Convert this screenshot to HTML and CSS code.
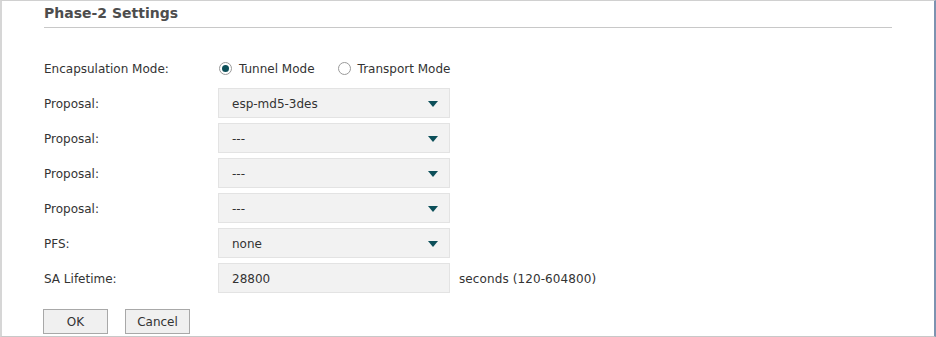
FILE: index.html
```html
<!DOCTYPE html>
<html lang="en">
<head>
    <meta charset="UTF-8" />
    <title>Phase-2 Settings</title>
    <link rel="stylesheet" href="styles.css">
</head>
<body>
    <div class="panel">
        <h2 class="titulo">Phase-2 Settings</h2>

        <div class="form">
            <label class="etiqueta">Encapsulation Mode:</label>
            <div class="control">
                <span class="radio marcado"></span><span class="radio-texto">Tunnel Mode</span>
                <span class="radio"></span><span class="radio-texto">Transport Mode</span>
            </div>

            <label class="etiqueta">Proposal:</label>
            <div class="control">
                <div class="selector"><span>esp-md5-3des</span>
                    <svg width="10" height="6" viewBox="0 0 10 6"><polygon points="0,0 10,0 5,6" /></svg>
                </div>
            </div>

            <label class="etiqueta">Proposal:</label>
            <div class="control">
                <div class="selector"><span>---</span>
                    <svg width="10" height="6" viewBox="0 0 10 6"><polygon points="0,0 10,0 5,6" /></svg>
                </div>
            </div>

            <label class="etiqueta">Proposal:</label>
            <div class="control">
                <div class="selector"><span>---</span>
                    <svg width="10" height="6" viewBox="0 0 10 6"><polygon points="0,0 10,0 5,6" /></svg>
                </div>
            </div>

            <label class="etiqueta">Proposal:</label>
            <div class="control">
                <div class="selector"><span>---</span>
                    <svg width="10" height="6" viewBox="0 0 10 6"><polygon points="0,0 10,0 5,6" /></svg>
                </div>
            </div>

            <label class="etiqueta">PFS:</label>
            <div class="control">
                <div class="selector"><span>none</span>
                    <svg width="10" height="6" viewBox="0 0 10 6"><polygon points="0,0 10,0 5,6" /></svg>
                </div>
            </div>

            <label class="etiqueta">SA Lifetime:</label>
            <div class="control">
                <div class="selector"><span>28800</span></div>
                <span class="ayuda">seconds (120-604800)</span>
            </div>
        </div>

        <div class="botones">
            <button class="boton">OK</button>
            <button class="boton">Cancel</button>
        </div>
    </div>
</body>
</html>
```

FILE: styles.css
```css
body {
    margin: 0;
    font-family: Tahoma, "DejaVu Sans", Verdana, sans-serif;
    font-size: 12px;
    color: #333;
    background-color: white;
}

.panel {
    width: 936px;
    height: 337px;
    box-sizing: border-box;
    border-top: 1px solid #d0d0d0;
    border-left: 2px solid #d6d6d6;
    border-bottom: 1px solid #c8c8c8;
    border-right: 2px solid #7d93b0;
    padding: 0 42px;
}

.titulo {
    margin: 0;
    padding-top: 3px;
    padding-bottom: 4px;
    line-height: 19px;
    font-size: 14px;
    font-weight: bold;
    color: #4d4d4d;
    border-bottom: 1px solid #c8c8c8;
}

.form {
    display: grid;
    grid-template-columns: 174px 1fr;
    row-gap: 5px;
    margin-top: 25px;
}

.etiqueta,
.control {
    display: flex;
    align-items: center;
    height: 30px;
    padding-top: 1px;
    box-sizing: border-box;
}

.radio {
    width: 11px;
    height: 11px;
    border: 1px solid #9a9a9a;
    border-radius: 50%;
    display: flex;
    align-items: center;
    justify-content: center;
    margin-left: 1px;
}

.radio.marcado::after {
    content: "";
    width: 7px;
    height: 7px;
    border-radius: 50%;
    background-color: #0c4f59;
}

.radio-texto {
    margin-left: 7px;
    margin-right: 22px;
}

.selector {
    width: 232px;
    height: 30px;
    margin-top: -1px;
    box-sizing: border-box;
    border: 1px solid #e3e3e3;
    background-color: #f2f2f2;
    display: flex;
    align-items: center;
    justify-content: space-between;
    padding: 1px 11px 0 13px;
}

.selector svg {
    fill: #0c4f59;
}

.ayuda {
    margin-left: 9px;
    letter-spacing: 0.1px;
}

.botones {
    display: flex;
    gap: 17px;
    margin-top: 16px;
    margin-left: -1px;
}

.boton {
    width: 65px;
    height: 25px;
    box-sizing: border-box;
    border: 1px solid #a8a8a8;
    background-color: #f0f0f0;
    font-family: inherit;
    font-size: 12px;
    color: #333;
    padding: 0;
}
```
